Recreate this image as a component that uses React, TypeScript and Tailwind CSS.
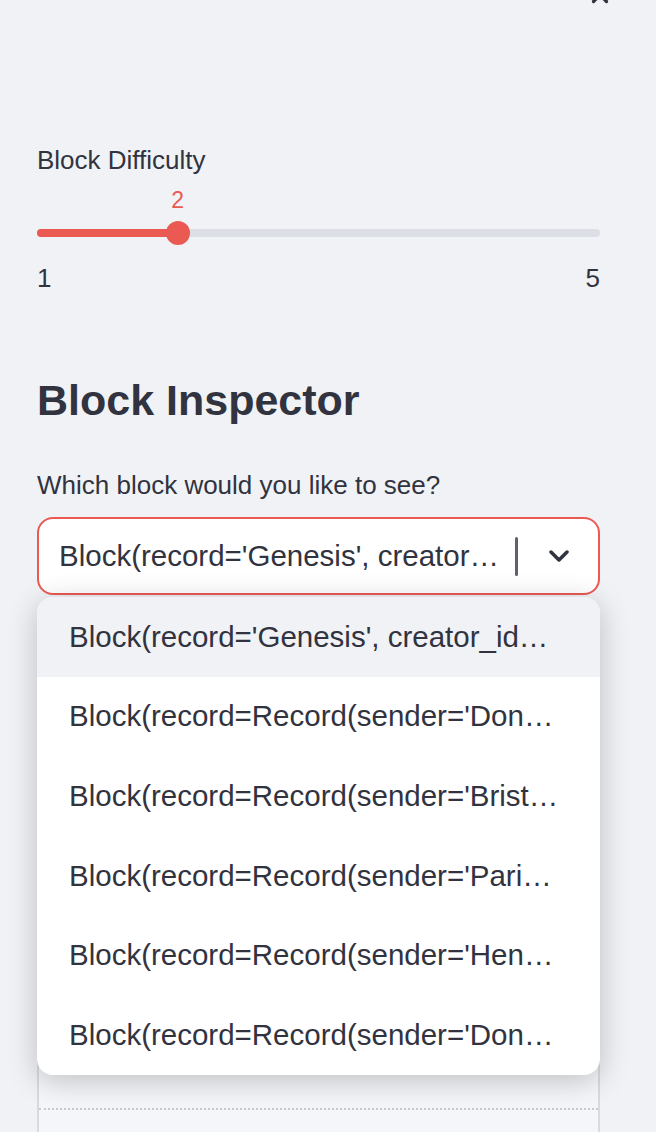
import { X } from "lucide-react";

const blocks = [
  "Block(record='Genesis', creator_id…",
  "Block(record=Record(sender='Don…",
  "Block(record=Record(sender='Brist…",
  "Block(record=Record(sender='Pari…",
  "Block(record=Record(sender='Hen…",
  "Block(record=Record(sender='Don…",
];

function DifficultySlider({ value, min, max }: { value: number; min: number; max: number }) {
  const pct = ((value - min) / (max - min)) * 100;

  return (
    <div className="flex flex-col">
      <label className="h-[36px] text-[26px] leading-[36px]">Block Difficulty</label>
      <div className="relative mt-[8px] h-[28px]">
        <span
          className="absolute top-0 -translate-x-1/2 text-[23px] leading-[28px] text-[#ea5a52]"
          style={{ left: `${pct}%` }}
        >
          {value}
        </span>
      </div>
      <div className="relative mt-[7px] flex h-[24px] items-center">
        <div className="h-[8px] w-full rounded-full bg-[#dcdfe6]" />
        <div className="absolute left-0 h-[8px] rounded-full bg-[#ea5a52]" style={{ width: `${pct}%` }} />
        <div
          className="absolute h-[24px] w-[24px] -translate-x-1/2 rounded-full bg-[#ea5a52]"
          style={{ left: `${pct}%` }}
        />
      </div>
      <div className="mt-[17px] flex h-[32px] justify-between text-[26px] leading-[32px]">
        <span>{min}</span>
        <span>{max}</span>
      </div>
    </div>
  );
}

function BlockSelect() {
  return (
    <div className="relative">
      <div className="flex h-[78px] items-center rounded-[16px] border-2 border-[#ea5a52] bg-white pl-[20px] pr-[29px]">
        <span className="flex-1 whitespace-nowrap text-[29.5px]">Block(record='Genesis', creator…</span>
        <div className="h-[39px] w-[3px] rounded-full bg-[#5f616b]" />
        <svg className="ml-[31px]" width="20" height="13" viewBox="0 0 20 13" fill="none" stroke="#31333f" strokeWidth="3.5" strokeLinecap="round" strokeLinejoin="round">
          <polyline points="2,2 10,10 18,2" />
        </svg>
      </div>

      <ul className="absolute left-0 right-0 top-[80px] z-10 overflow-hidden rounded-[16px] bg-white shadow-[0_6px_30px_rgba(0,0,0,0.22)]">
        {blocks.map((label, i) => (
          <li
            key={i}
            className={`flex h-[79.7px] items-center whitespace-nowrap pl-[32px] text-[29.5px] ${i === 0 ? "bg-[#f0f2f6]" : ""}`}
          >
            {label}
          </li>
        ))}
      </ul>
    </div>
  );
}

function BlockTable() {
  return (
    <div className="mt-[28px] flex flex-col border-x-2 border-[#d9dadf] bg-[#f5f6f9]">
      <div className="h-[485px]" />
      <div className="h-[120px] border-t-2 border-dotted border-[#c9cacf]" />
    </div>
  );
}

export default function App() {
  return (
    <div className="flex h-screen flex-col overflow-hidden bg-[#f0f2f6] pl-[37px] pr-[56px] font-['Liberation_Sans',Arial,sans-serif] text-[#31333f]">
      <div className="-mt-[18px] flex justify-end">
        <X className="mr-[-13px] h-[26px] w-[26px] text-[#31333f]" strokeWidth={3} />
      </div>

      <div className="mt-[134px]">
        <DifficultySlider value={2} min={1} max={5} />
      </div>

      <h2 className="mt-[80px] h-[52px] text-[43px] font-bold leading-[52px]">Block Inspector</h2>

      <label className="mt-[41px] h-[36px] text-[26px] leading-[36px]">Which block would you like to see?</label>

      <div className="mt-[14px]">
        <BlockSelect />
      </div>

      <BlockTable />
    </div>
  );
}
